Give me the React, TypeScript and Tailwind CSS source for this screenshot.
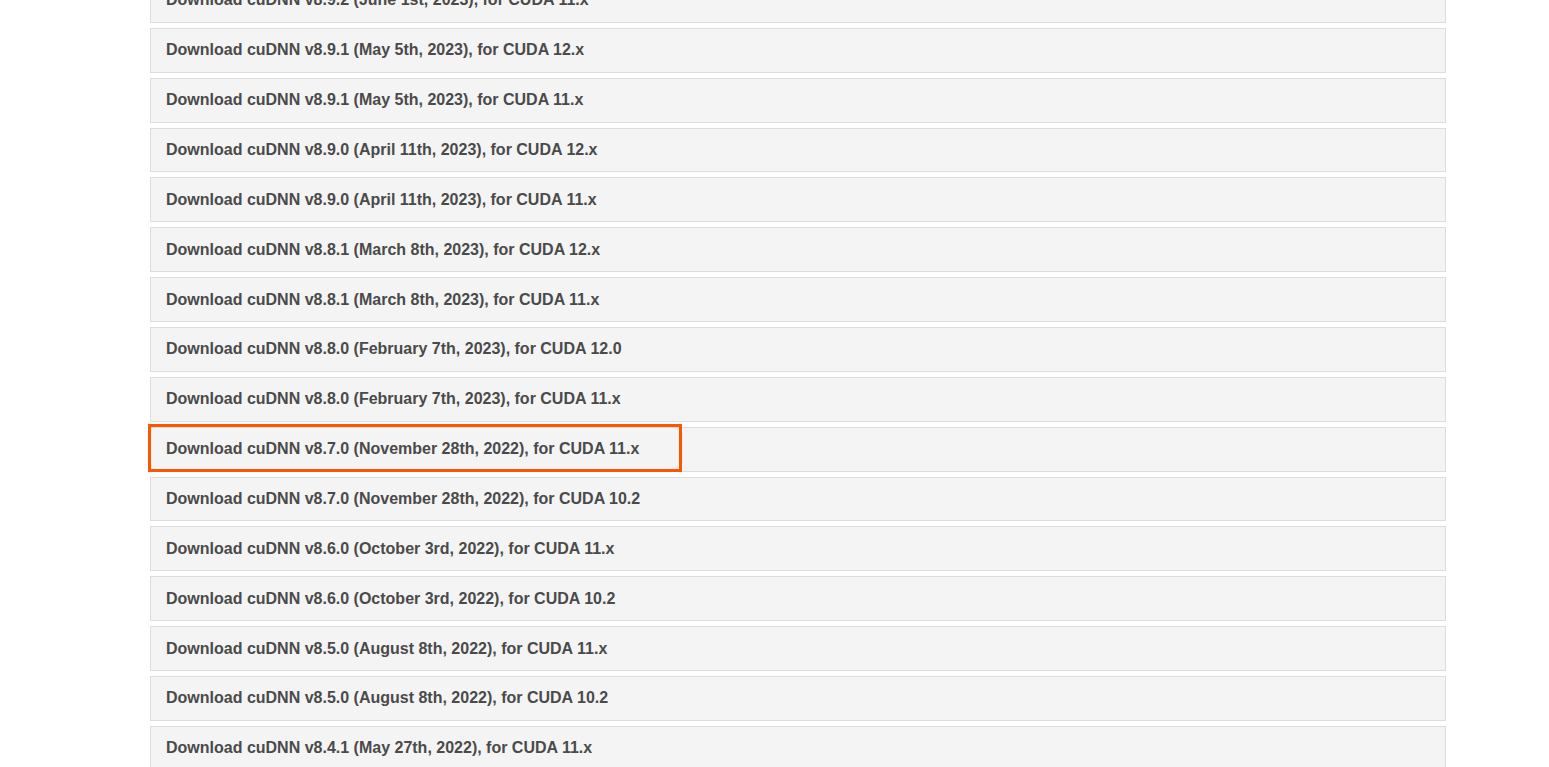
import React from 'react';

const rows = [
  'Download cuDNN v8.9.2 (June 1st, 2023), for CUDA 11.x',
  'Download cuDNN v8.9.1 (May 5th, 2023), for CUDA 12.x',
  'Download cuDNN v8.9.1 (May 5th, 2023), for CUDA 11.x',
  'Download cuDNN v8.9.0 (April 11th, 2023), for CUDA 12.x',
  'Download cuDNN v8.9.0 (April 11th, 2023), for CUDA 11.x',
  'Download cuDNN v8.8.1 (March 8th, 2023), for CUDA 12.x',
  'Download cuDNN v8.8.1 (March 8th, 2023), for CUDA 11.x',
  'Download cuDNN v8.8.0 (February 7th, 2023), for CUDA 12.0',
  'Download cuDNN v8.8.0 (February 7th, 2023), for CUDA 11.x',
  'Download cuDNN v8.7.0 (November 28th, 2022), for CUDA 11.x',
  'Download cuDNN v8.7.0 (November 28th, 2022), for CUDA 10.2',
  'Download cuDNN v8.6.0 (October 3rd, 2022), for CUDA 11.x',
  'Download cuDNN v8.6.0 (October 3rd, 2022), for CUDA 10.2',
  'Download cuDNN v8.5.0 (August 8th, 2022), for CUDA 11.x',
  'Download cuDNN v8.5.0 (August 8th, 2022), for CUDA 10.2',
  'Download cuDNN v8.4.1 (May 27th, 2022), for CUDA 11.x',
];

export default function App() {
  return (
    <div className="h-[767px] w-full overflow-hidden bg-white font-['Liberation_Sans',Arial,sans-serif]">
      <div className="ml-[150px] mt-[-22px] flex w-[1296px] flex-col gap-[5px]">
        {rows.map((r, i) => (
          <div
            key={i}
            className="relative flex h-[44.86px] shrink-0 items-center border border-[#dddddd] bg-[#f4f4f4] px-[15px]"
          >
            <span className="text-[16px] font-bold text-[#4a4a4a]">{r}</span>
            {i === 9 && (
              <div className="absolute left-[-3px] top-[-4px] h-[48px] w-[534px] border-[3px] border-[#ff5500]" />
            )}
          </div>
        ))}
      </div>
    </div>
  );
}
